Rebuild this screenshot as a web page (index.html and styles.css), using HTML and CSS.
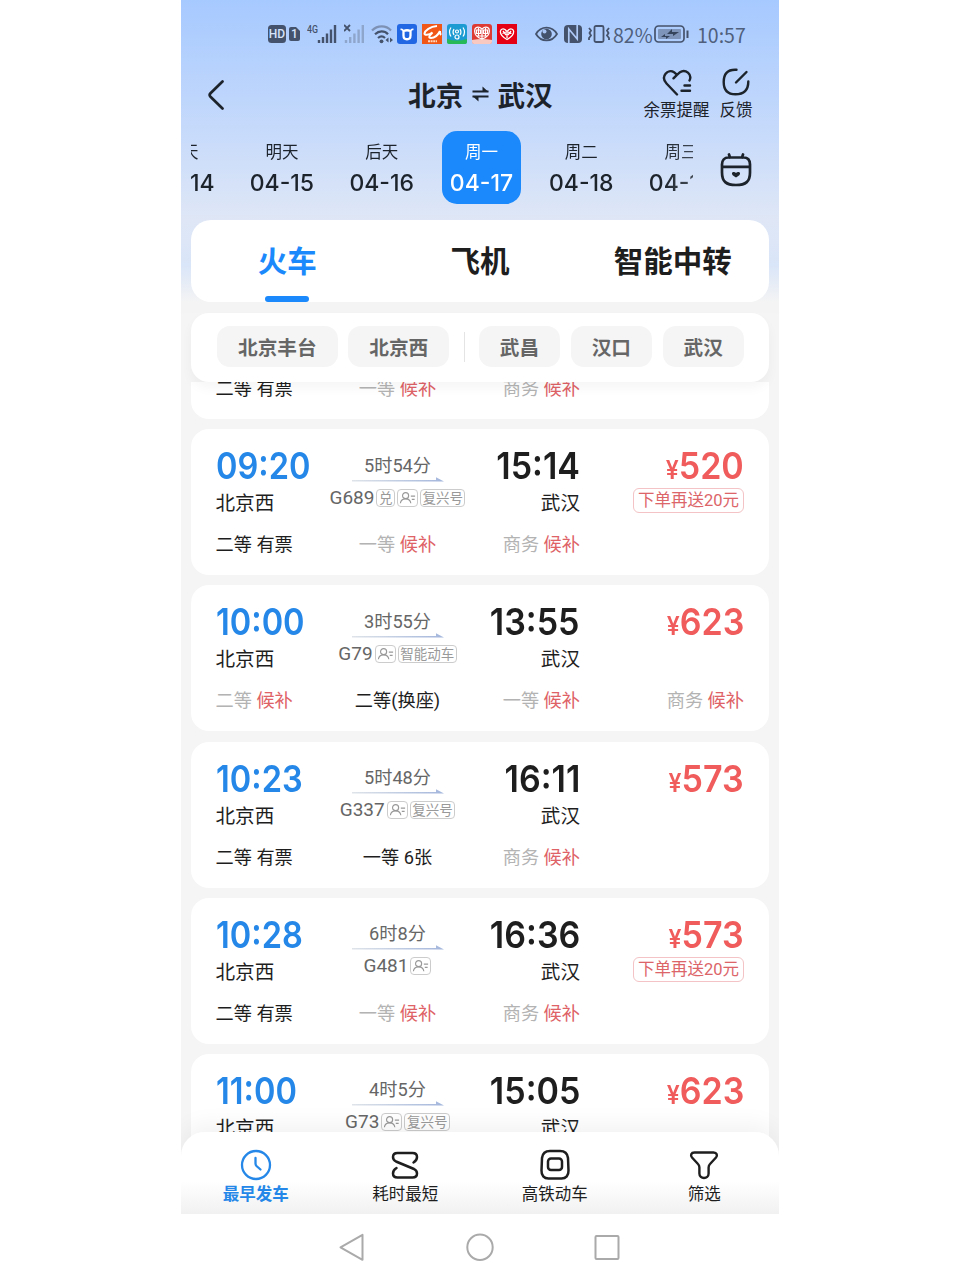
FILE: index.html
```
<!DOCTYPE html>
<html lang="zh-CN">
  <head>
    <meta charset="UTF-8" />
    <meta name="viewport" content="width=device-width, initial-scale=1.0" />
    <title>北京 ⇌ 武汉</title>
    <link rel="stylesheet" href="styles.css">
  </head>
  <body>
    <!-- shared icons -->
    <svg class="defs" width="0" height="0">
      <symbol id="arrow" viewBox="0 0 92 5">
        <linearGradient id="fade" x1="0" x2="1">
          <stop offset="0" stop-color="#dfe4e9" />
          <stop offset="1" stop-color="#a3b6dc" />
        </linearGradient>
        <path d="M0 3h84V.3L92 4.400H0z" fill="url(#fade)" />
      </symbol>
      <symbol id="idcard" viewBox="0 0 20 16">
        <g fill="none" stroke="#999" stroke-width="1.2">
          <circle cx="8" cy="5.500" r="3.200" />
          <path d="M2.500 13.500c.4-3 2.500-4.600 5.500-4.600s5.100 1.600 5.500 4.600M13.500 6h4.500M14.500 9.500h3" />
        </g>
      </symbol>
    </svg>

    <div class="phone">
      <div class="top">
        <div class="status">
          <svg class="hd" width="18" height="18" viewBox="0 0 18 18">
            <rect width="18" height="18" rx="3.500" fill="#45526b" />
            <text x="9" y="13.300" text-anchor="middle" font-size="12" fill="#d5e3fb">HD</text>
          </svg>
          <svg class="sim" width="11" height="14" viewBox="0 0 11 14">
            <path d="M2 0h5l4 4v8a2 2 0 0 1-2 2H2a2 2 0 0 1-2-2V2a2 2 0 0 1 2-2z" fill="#45526b" />
            <text x="5.300" y="11.300" text-anchor="middle" font-size="12" fill="#d5e3fb">1</text>
          </svg>
          <svg class="signal" width="31" height="20" viewBox="0 0 31 20">
            <text x="0" y="8.500" font-size="10" textLength="11" lengthAdjust="spacingAndGlyphs" fill="#45526b">4G</text>
            <path d="M12 16v3M16 13v6M20 9.500v9.500M24 5.500v13.500M28 1v18" stroke="#45526b" stroke-width="2.400" />
          </svg>
          <svg class="nosignal" width="21" height="20" viewBox="0 0 21 20">
            <path d="M0 1l6 6M6 1L0 7" stroke="#45526b" stroke-width="1.900" />
            <path d="M2 16v3M6.200 13v6M10.400 9.500v9.500M14.600 5.500v13.500M18.800 1v18" stroke="#8fa6cc" stroke-width="2.400" />
          </svg>
          <svg class="wifi" width="22" height="20" viewBox="0 0 22 20">
            <g fill="none" stroke-width="2.200">
              <path d="M1 6.500c5.500-5.500 14-5.500 19 0" stroke="#7d91b5" />
              <path d="M4 10.300c4-3.800 9.500-3.800 13 0M7 14c2.200-2 5-2 7 0" stroke="#45526b" />
            </g>
            <circle cx="10.500" cy="17.300" r="1.900" fill="#45526b" />
            <path d="M17.500 13.500v5l-3-2.500zM19 13.500v5l3-2.500z" fill="#45526b" />
          </svg>
          <svg class="app" width="20" height="20" viewBox="0 0 20 20">
            <rect width="20" height="20" rx="3" fill="#2166e3" />
            <path d="M6.500 7v4.500c0 5 7 5 7 0V7q-3.500-1.500-7 0z" fill="none" stroke="#fff" stroke-width="2.300" />
            <path d="M3.500 5.500q2-.5 3 1.500M16.500 5.500q-2-.5-3 1.500" fill="none" stroke="#fff" stroke-width="1.600" />
          </svg>
          <svg class="app" width="20" height="20" viewBox="0 0 20 20">
            <rect width="20" height="20" fill="#f15716" />
            <path d="M15 2C8 2.500 3 6.500 2.500 9.500c0 2 4 1.500 8-1-4 4-4 5.500-1.500 5.500 3.500 0 7-3 9-7M18 7c0 2 0 3 1 4" fill="none" stroke="#fff" stroke-width="2" />
            <path d="M6 17.200h9" stroke="#ffd8c0" stroke-width="2" stroke-dasharray="2 .6" />
          </svg>
          <svg class="app" width="20" height="20" viewBox="0 0 20 20">
            <rect width="20" height="20" rx="3" fill="#1c9bd2" />
            <path d="M0 15q10 3 20 0v3a2 2 0 0 1-2 2H2a2 2 0 0 1-2-2z" fill="#27b957" />
            <g fill="none" stroke="#fff" stroke-width="1.200">
              <path d="M4 3.500c-2 3-2 6 0 9M7 5c-1.300 2-1.300 4 0 6M13 5c1.300 2 1.300 4 0 6M16 3.500c2 3 2 6 0 9" />
              <circle cx="10" cy="7.500" r="1.500" /><circle cx="10" cy="13" r="2" />
            </g>
          </svg>
          <svg class="app" width="20" height="20" viewBox="0 0 20 20">
            <rect width="20" height="20" rx="3" fill="#dd3a34" />
            <path d="M0 16q10-2 20 0v2a2 2 0 0 1-2 2H2a2 2 0 0 1-2-2z" fill="#f7c9c0" />
            <g fill="none" stroke="#fff" stroke-width="1.200">
              <path d="M10 15C0 12 1 1 8 3.500l2 1.500 2-1.500c7-2.500 8 8.500-2 11.500zM4.500 6h4v3.500h-4zM11.500 6h4v3.500h-4zM10 5v10M5 12h10M6.500 4v8M13.500 4v8" />
            </g>
          </svg>
          <svg class="app" width="20" height="20" viewBox="0 0 20 20">
            <rect width="20" height="20" fill="#e50113" />
            <g fill="none" stroke="#fff" stroke-width="1.300">
              <path d="M10 15.500C0 10 3 3 8 5.500l2 2 2-2c5-2.500 8 4.500-2 10zM6 7l3 4M14 7l-3 4M10 8v6M5.500 9.500L9 8M14.500 9.500L11 8" />
            </g>
          </svg>
          <svg class="eye" width="23" height="16" viewBox="0 0 23 16">
            <path d="M1 8C6-.5 17-.5 22 8 17 16.500 6 16.500 1 8z" fill="none" stroke="#45526b" stroke-width="1.800" />
            <circle cx="11.500" cy="8" r="5.300" fill="#45526b" />
            <circle cx="9.500" cy="5.500" r="2" fill="#a9c5f5" />
          </svg>
          <svg class="nfc" width="18" height="18" viewBox="0 0 18 18">
            <rect width="18" height="18" rx="4" fill="#45526b" />
            <path d="M4.800 18V4l8.400 10V0" fill="none" stroke="#b0caf8" stroke-width="1.700" />
          </svg>
          <svg class="vibrate" width="22" height="18" viewBox="0 0 22 18">
            <g fill="none" stroke="#45526b" stroke-width="1.800">
              <rect x="6.500" y="1" width="9" height="16" rx="1.500" />
              <path d="M1 3l2 2.500L1.500 8 3 10.500 1 13v2M21 3l-2 2.500L20.500 8 19 10.500l2 2.500v2" />
            </g>
          </svg>
          <span class="percent">82%</span>
          <svg class="battery" width="35" height="18" viewBox="0 0 35 18">
            <rect x="1" y="1" width="29" height="16" rx="3.500" fill="none" stroke="#45526b" stroke-width="1.700" />
            <rect x="4" y="4" width="23" height="10" rx="1" fill="#7f94b9" />
            <path d="M13 9L18 4v3h7l-6 4V9zM7 12l4-3v2h5l-4 3v-2z" fill="#36445c" />
            <path d="M33.500 5.500v7.500" stroke="#45526b" stroke-width="2" />
          </svg>
          <span class="clock">10:57</span>
        </div>

        <div class="header">
          <svg class="back" width="18" height="32" viewBox="0 0 18 32">
            <path d="M15.500 2.500L3.500 14.200q-1.700 1.800 0 3.600L15.500 29.500" fill="none" stroke="#1d232b" stroke-width="2.700" stroke-linecap="round" />
          </svg>
          <h1 class="title">
            北京
            <svg width="17" height="16" viewBox="0 0 17 16">
              <path d="M.5 5.500h16M16.500 10.500H.5" stroke="#1d232b" stroke-width="2.200" />
              <path d="M10.500 .5l6 5.500h-6zM6.500 15.500L.5 10h6z" fill="#1d232b" />
            </svg>
            武汉
          </h1>
          <div class="actions">
            <div class="action">
              <svg width="30" height="28" viewBox="0 0 30 28">
                <g fill="none" stroke="#1d232b" stroke-width="2.400" stroke-linecap="round">
                  <path d="M15 26.500L4.500 15.500C-2 8.500 6 .5 12 4.200L15 6.800l-3.500 3.500M15 6.800l3-2.600C23.500.5 30.500 6.500 27.500 12.500" />
                  <path d="M22.500 17.500h5.500M19.500 22.800h8.500" />
                </g>
              </svg>
              <span>余票提醒</span>
            </div>
            <div class="action">
              <svg width="30" height="28" viewBox="0 0 30 28">
                <g fill="none" stroke="#1d232b" stroke-width="2.400" stroke-linecap="round">
                  <path d="M15.500 1.700H14C6 1.700 2.700 6 2.700 14S6 26.300 14.500 26.300 27.300 22 27.300 13.500" />
                  <path d="M15 14.500L25.500 4" />
                </g>
              </svg>
              <span>反馈</span>
            </div>
          </div>
        </div>

        <div class="dates">
          <div class="strip">
            <div class="day"><span>今天</span><b>04-14</b></div>
            <div class="day"><span>明天</span><b>04-15</b></div>
            <div class="day"><span>后天</span><b>04-16</b></div>
            <div class="day active"><span>周一</span><b>04-17</b></div>
            <div class="day"><span>周二</span><b>04-18</b></div>
            <div class="day"><span>周三</span><b>04-19</b></div>
          </div>
          <svg class="calendar" width="32" height="34" viewBox="0 0 32 34">
            <g fill="none" stroke="#1d232b" stroke-width="2.700" stroke-linecap="round">
              <path d="M8.500 4.500h15c4 0 6.500 2.500 6.500 7v8c0 9-4 12.500-14 12.500S2 28.500 2 19.500v-8c0-4.500 2.500-7 6.500-7zM2.500 13.800h27M9 1.500l1 3M23 1.500l-1 3" />
            </g>
            <path d="M16 24.500c-3-1.700-4.500-3-4-4.500.5-1.300 3-1.300 4 0 1-1.300 3.500-1.300 4 0 .5 1.500-1 2.800-4 4.500z" fill="#1d232b" />
          </svg>
        </div>

        <div class="tabs">
          <div class="tab active">火车</div>
          <div class="tab">飞机</div>
          <div class="tab">智能中转</div>
        </div>
      </div>

      <div class="filters">
        <span class="chip">北京丰台</span>
        <span class="chip">北京西</span>
        <i class="divider"></i>
        <span class="chip">武昌</span>
        <span class="chip">汉口</span>
        <span class="chip">武汉</span>
      </div>

      <div class="list">
        <div class="card cut">
          <div class="seats">
            <span>二等 有票</span>
            <span class="off">一等 <em>候补</em></span>
            <span class="off">商务 <em>候补</em></span>
          </div>
        </div>

        <div class="card">
          <div class="train">
            <div class="from"><b class="time">09:20</b><span>北京西</span></div>
            <div class="trip">
              <span class="length">5时54分</span>
              <svg class="arrow" width="92" height="5"><use href="#arrow" /></svg>
              <div class="number">G689<i class="tag">兑</i><svg class="tag"><use href="#idcard" /></svg><i class="tag">复兴号</i></div>
            </div>
            <div class="to"><b class="time">15:14</b><span>武汉</span></div>
            <div class="cost"><b class="price"><small>¥</small>520</b><span class="promo">下单再送20元</span></div>
          </div>
          <div class="seats">
            <span>二等 有票</span>
            <span class="off">一等 <em>候补</em></span>
            <span class="off">商务 <em>候补</em></span>
          </div>
        </div>

        <div class="card">
          <div class="train">
            <div class="from"><b class="time">10:00</b><span>北京西</span></div>
            <div class="trip">
              <span class="length">3时55分</span>
              <svg class="arrow" width="92" height="5"><use href="#arrow" /></svg>
              <div class="number">G79<svg class="tag"><use href="#idcard" /></svg><i class="tag">智能动车</i></div>
            </div>
            <div class="to"><b class="time">13:55</b><span>武汉</span></div>
            <div class="cost"><b class="price"><small>¥</small>623</b></div>
          </div>
          <div class="seats">
            <span class="off">二等 <em>候补</em></span>
            <span>二等(换座)</span>
            <span class="off">一等 <em>候补</em></span>
            <span class="off">商务 <em>候补</em></span>
          </div>
        </div>

        <div class="card">
          <div class="train">
            <div class="from"><b class="time">10:23</b><span>北京西</span></div>
            <div class="trip">
              <span class="length">5时48分</span>
              <svg class="arrow" width="92" height="5"><use href="#arrow" /></svg>
              <div class="number">G337<svg class="tag"><use href="#idcard" /></svg><i class="tag">复兴号</i></div>
            </div>
            <div class="to"><b class="time">16:11</b><span>武汉</span></div>
            <div class="cost"><b class="price"><small>¥</small>573</b></div>
          </div>
          <div class="seats">
            <span>二等 有票</span>
            <span>一等 6张</span>
            <span class="off">商务 <em>候补</em></span>
          </div>
        </div>

        <div class="card">
          <div class="train">
            <div class="from"><b class="time">10:28</b><span>北京西</span></div>
            <div class="trip">
              <span class="length">6时8分</span>
              <svg class="arrow" width="92" height="5"><use href="#arrow" /></svg>
              <div class="number">G481<svg class="tag"><use href="#idcard" /></svg></div>
            </div>
            <div class="to"><b class="time">16:36</b><span>武汉</span></div>
            <div class="cost"><b class="price"><small>¥</small>573</b><span class="promo">下单再送20元</span></div>
          </div>
          <div class="seats">
            <span>二等 有票</span>
            <span class="off">一等 <em>候补</em></span>
            <span class="off">商务 <em>候补</em></span>
          </div>
        </div>

        <div class="card">
          <div class="train">
            <div class="from"><b class="time">11:00</b><span>北京西</span></div>
            <div class="trip">
              <span class="length">4时5分</span>
              <svg class="arrow" width="92" height="5"><use href="#arrow" /></svg>
              <div class="number">G73<svg class="tag"><use href="#idcard" /></svg><i class="tag">复兴号</i></div>
            </div>
            <div class="to"><b class="time">15:05</b><span>武汉</span></div>
            <div class="cost"><b class="price"><small>¥</small>623</b></div>
          </div>
        </div>
      </div>

      <div class="sortbar">
        <div class="sort active">
          <svg width="32" height="32" viewBox="0 0 32 32">
            <g fill="none" stroke="currentColor" stroke-width="2.300" stroke-linecap="round">
              <circle cx="16" cy="16" r="14" />
              <path d="M15.500 9v5.500q0 1.500 1 2.500l4 3.500" />
            </g>
          </svg>
          <span>最早发车</span>
        </div>
        <div class="sort">
          <svg width="32" height="32" viewBox="0 0 32 32">
            <path d="M24.500 13.500q3.500-2 3.500-5.500c0-3-1.500-4-4.500-4h-15C5.500 4 4 5.500 4 8q0 3 3 4.500l18 7.500q3 1.500 3 4.500c0 2.500-1.500 4-4.500 4h-15c-3 0-4.500-1.500-4.500-4q0-3.500 3.500-5.500" fill="none" stroke="currentColor" stroke-width="2.500" stroke-linecap="round" />
          </svg>
          <span>耗时最短</span>
        </div>
        <div class="sort">
          <svg width="32" height="32" viewBox="0 0 32 32">
            <g fill="none" stroke="currentColor" stroke-width="2.500">
              <path d="M11 2h10c5 0 7.500 3 8 7l.5 12.500c.2 5-2.500 8-7 8h-13c-4.500 0-7.200-3-7-8L3 9c.5-4 3-7 8-7z" />
              <rect x="9" y="9.500" width="14" height="11.500" rx="3" />
            </g>
          </svg>
          <span>高铁动车</span>
        </div>
        <div class="sort">
          <svg width="32" height="32" viewBox="0 0 32 32">
            <path d="M6.500 3.500h19c3.500 0 4.200 3 2.500 5l-6 6.500c-1 1-1.400 2-1.400 3.500v6c0 6-9.200 6-9.200 0v-6c0-1.500-.4-2.500-1.400-3.500L4 8.500c-1.800-2-1-5 2.500-5z" fill="none" stroke="currentColor" stroke-width="2.400" stroke-linejoin="round" />
          </svg>
          <span>筛选</span>
        </div>
      </div>

      <div class="navbar">
        <svg width="28" height="28" viewBox="0 0 28 28">
          <path d="M23.500 1.800v25L1.500 14.300z" />
        </svg>
        <svg width="28" height="28" viewBox="0 0 28 28">
          <circle cx="14" cy="14.300" r="12.700" />
        </svg>
        <svg width="28" height="28" viewBox="0 0 28 28">
          <rect x="2.500" y="3" width="23" height="23" rx="1" />
        </svg>
      </div>
    </div>
  </body>
</html>
```

FILE: styles.css
```
* {
  box-sizing: border-box;
}

body {
  font-family: Roboto, "Noto Sans CJK SC", sans-serif;
  margin: 0;
  background: #fff;
  color: #1e1e1e;
}

.defs {
  position: absolute;
}

i,
em {
  font-style: normal;
}

.phone {
  width: 598px;
  height: 1280px;
  margin: 0 auto;
  background: #f5f5f5;
  overflow: hidden;
}

.top {
  height: 313px;
  background: linear-gradient(#a6c9ff 0, #c6dafb 130px, #dfe7f6 220px, #d9e5f8 265px, #f4f4f4 302px);
}

/* Status bar */
.status {
  display: flex;
  align-items: center;
  height: 68px;
  padding-left: 87px;
  color: #4f5f7c;
  font-family: "Noto Sans CJK SC", sans-serif;
}

.status svg {
  flex: none;
}

.status text {
  font-family: Roboto, sans-serif;
  font-weight: 500;
}

.sim {
  margin-left: 3px;
}

.signal {
  margin-left: 7px;
}

.nosignal {
  margin-left: 6px;
}

.wifi {
  margin-left: 6px;
}

.app {
  margin-left: 5px;
}

.wifi + .app {
  margin-left: 4px;
}

.eye {
  margin-left: 18px;
}

.nfc {
  margin-left: 6px;
}

.vibrate {
  margin-left: 6px;
}

.percent,
.clock {
  padding-top: 2px;
  font-size: 19.5px;
  line-height: 20px;
}

.percent {
  width: 41px;
  margin-left: 3px;
}

.clock {
  margin-left: 8px;
}

/* Title row */
.header {
  display: flex;
  align-items: center;
  height: 54px;
  padding: 0 24.5px 0 26px;
}

.title {
  display: flex;
  flex: 1;
  align-items: center;
  gap: 8.5px;
  margin: 0 0 0 183px;
  padding-top: 3px;
  color: #1d232b;
  font-size: 27.7px;
  font-weight: 700;
  line-height: 38px;
}

.title svg {
  margin-top: -5px;
}

.actions {
  display: flex;
  gap: 8px;
}

.action {
  display: flex;
  flex-direction: column;
  align-items: center;
  min-width: 37px;
  color: #1d232b;
  font-size: 16.5px;
  line-height: 30px;
}

.action svg {
  margin-top: 4px;
}

/* Date strip */
.dates {
  display: flex;
  align-items: flex-start;
  height: 98px;
  padding: 9px 0 0 10px;
}

.strip {
  display: flex;
  width: 502px;
  overflow: hidden;
  -webkit-mask-image: linear-gradient(90deg, #000 470px, rgba(0, 0, 0, 0.8));
}

.day {
  display: flex;
  flex: none;
  flex-direction: column;
  align-items: center;
  width: 79px;
  height: 73px;
  margin-right: 20.8px;
  padding-top: 7px;
  border-radius: 15px;
  color: #1d232b;
  font-size: 16.5px;
  line-height: 29px;
}

.day:first-child {
  margin-left: -48.4px;
}

.day b {
  font-family: Inter, sans-serif;
  font-size: 23px;
  font-weight: 500;
  line-height: 33px;
}

.day.active {
  background: #1b89fb;
  color: #fff;
}

.calendar {
  margin: 22px 0 0 27px;
}

/* Transport tabs */
.tabs {
  display: grid;
  grid-template-columns: repeat(3, 1fr);
  height: 82px;
  margin: 0 10px;
  border-radius: 20px;
  background: #fff;
}

.tab {
  display: flex;
  flex-direction: column;
  align-items: center;
  justify-content: space-between;
  padding-top: 22px;
  font-size: 29.5px;
  font-weight: 700;
  line-height: 40px;
}

.tab.active {
  color: #1b89fb;
}

.tab.active::after {
  content: "";
  width: 44px;
  height: 6px;
  border-radius: 3px;
  background: #1b89fb;
}

/* Station filters */
.filters {
  position: relative;
  z-index: 1;
  display: flex;
  align-items: center;
  height: 69px;
  margin: 0 10px;
  padding: 0 0 2px 26px;
  border-radius: 18px;
  background: #fff;
  box-shadow: 0 6px 12px rgba(0, 0, 0, 0.04);
}

.chip {
  height: 41px;
  margin-right: 10.5px;
  padding: 2px 21px 0;
  border-radius: 13px;
  background: #f5f5f5;
  color: #666;
  font-size: 19.7px;
  font-weight: 700;
  line-height: 42px;
}

.divider {
  width: 1px;
  height: 30px;
  margin: 0 14px 0 4px;
  background: #e4e4e4;
}

/* Train list */
.list {
  display: flex;
  flex-direction: column;
  gap: 10.2px;
  height: 768px;
  padding: 0 10px;
  overflow: hidden;
}

.card {
  flex: none;
  height: 146px;
  padding: 15px 25px 0;
  border-radius: 18px;
  background: #fff;
}

.card.cut {
  height: 37px;
  padding-top: 0;
  border-radius: 0 0 18px 18px;
  overflow: hidden;
}

.card.cut .seats {
  margin-top: -7px;
}

.train,
.seats {
  display: grid;
  grid-template-columns: 109px 145px 110px 164px;
}

.train {
  height: 72px;
  font-size: 19.6px;
  line-height: 31px;
}

.from,
.to,
.cost {
  display: flex;
  flex-direction: column;
  align-items: flex-start;
}

.to,
.cost {
  align-items: flex-end;
}

.time,
.price {
  font-family: Inter, sans-serif;
  font-size: 37px;
  font-weight: 600;
  line-height: 44px;
  transform: scaleX(0.92);
  transform-origin: right;
}

.from .time {
  margin-left: -0.5px;
  color: #2588e8;
  transform: scaleX(0.88);
  transform-origin: left;
}

.from span {
  margin-left: -0.5px;
}

.price {
  color: #f05b5b;
}

.price small {
  font-size: 25px;
}

.promo {
  height: 25px;
  margin-top: -2px;
  padding: 0 4px;
  border: 1px solid #f3c3c5;
  border-radius: 6px;
  color: #dc6569;
  font-size: 16.5px;
  line-height: 24px;
}

.price + .promo {
  margin-top: -4px;
}

.trip {
  display: flex;
  flex-direction: column;
  align-items: center;
  padding-top: 5.5px;
  color: #666;
}

.length {
  height: 27px;
  font-size: 18.2px;
}

.arrow {
  flex: none;
}

.number {
  display: flex;
  align-items: center;
  font-size: 19px;
  line-height: 32px;
  white-space: nowrap;
}

.tag {
  flex: none;
  height: 18px;
  margin-left: 2px;
  padding: 0 1.5px;
  border: 1px solid #ccc;
  border-radius: 4px;
  color: #999;
  font-size: 13.5px;
  line-height: 17px;
}

svg.tag {
  width: 21px;
  padding: 0;
}

.seats {
  margin-top: 15px;
  font-size: 18.2px;
  line-height: 28px;
}

.seats span:first-child {
  margin-left: -0.5px;
}

.seats span:nth-child(2) {
  text-align: center;
}

.seats span:nth-child(n + 3) {
  text-align: right;
}

.off {
  color: #b3b3b3;
}

.off em {
  color: #de6266;
}

/* Sort bar over the list */
.sortbar {
  position: relative;
  display: grid;
  grid-template-columns: repeat(4, 1fr);
  height: 82px;
  margin-top: -18px;
  padding-top: 17px;
  border-radius: 24px 24px 0 0;
  background: linear-gradient(#fff 60%, #f1f1f1);
  box-shadow: 0 -6px 24px rgba(0, 0, 0, 0.06);
}

.sort {
  display: flex;
  flex-direction: column;
  align-items: center;
  font-size: 16.5px;
  line-height: 27px;
}

.sort.active {
  color: #2588e8;
  font-weight: 700;
}

/* System navigation */
.navbar {
  position: relative;
  display: flex;
  justify-content: center;
  align-items: center;
  gap: 99px;
  height: 66px;
  background: #fff;
}

.navbar svg {
  fill: none;
  stroke: #aaa;
  stroke-width: 2;
  stroke-linejoin: round;
}
```
